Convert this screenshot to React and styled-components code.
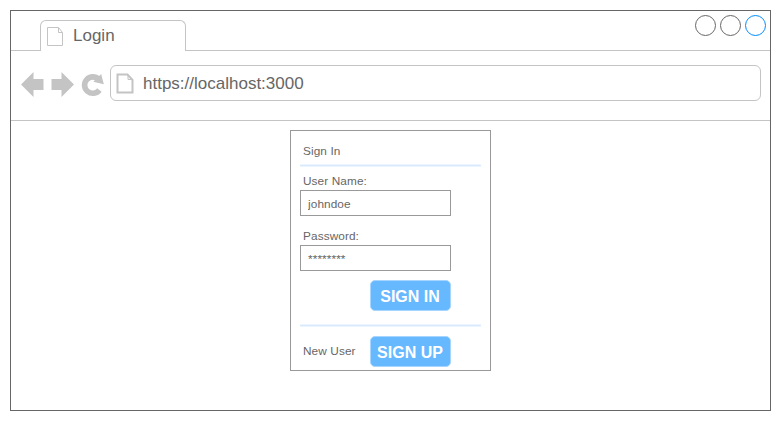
import React from "react";
import styled, { createGlobalStyle } from "styled-components";

const GlobalStyle = createGlobalStyle`
  *, *::before, *::after { box-sizing: border-box; }
  body { margin: 0; background: #fff; font-family: "Liberation Sans", Arial, sans-serif; color: #666; }
`;

const Page = styled.div`
  width: 781px;
  height: 421px;
  padding: 10px;
`;

const Window = styled.main`
  width: 761px;
  height: 401px;
  border: 1px solid #666;
  display: flex;
  flex-direction: column;
`;

const TabStrip = styled.header`
  flex: none;
  height: 40px;
  display: flex;
  align-items: flex-end;
  justify-content: space-between;
  padding: 0 4px 0 29px;
  border-bottom: 1px solid #c4c4c4;
`;

const Tab = styled.div`
  width: 146px;
  height: 31px;
  margin-bottom: -1px;
  padding: 0 0 0 6px;
  display: flex;
  align-items: center;
  gap: 9px;
  background: #fff;
  border: 1px solid #c4c4c4;
  border-bottom: 0;
  border-radius: 6px 6px 0 0;
  font-size: 17px;
  line-height: 20px;
`;

const Controls = styled.div`
  display: flex;
  gap: 4px;
  align-self: flex-start;
  padding-top: 4px;
`;

const Control = styled.span`
  width: 21px;
  height: 21px;
  border: 1px solid ${(p) => (p.$active ? "#008cff" : "#666")};
  border-radius: 50%;
`;

const Toolbar = styled.nav`
  flex: none;
  height: 70px;
  display: flex;
  align-items: flex-start;
  padding: 14px 9px 0 10px;
  border-bottom: 1px solid #c4c4c4;
`;

const NavIcons = styled.svg`
  flex: none;
  display: block;
  width: 89px;
  height: 36px;
`;

const AddressBar = styled.div`
  flex: 1;
  height: 36px;
  display: flex;
  align-items: center;
  gap: 9px;
  padding-left: 5px;
  border: 1px solid #c4c4c4;
  border-radius: 6px;
  font-size: 17px;
  line-height: 20px;
`;

const Url = styled.span`
  padding-top: 2px;
`;

const PageIcon = styled.svg`
  flex: none;
  display: block;
  fill: none;
  stroke: #c4c4c4;
`;

const Content = styled.section`
  flex: 1;
  padding: 9px 0 0 279px;
`;

const Card = styled.form`
  width: 201px;
  height: 241px;
  padding: 13px 9px 0;
  border: 1px solid #999;
  display: flex;
  flex-direction: column;
  font-size: 11.8px;
  letter-spacing: 0.1px;
  line-height: 14px;
`;

const Title = styled.div`
  padding-left: 3px;
`;

const Divider = styled.hr`
  width: 181px;
  height: 3px;
  margin: ${(p) => p.$margin};
  border: 0;
  border-radius: 1px;
  background: linear-gradient(#ebf4ff 0 1px, #d9eaff 1px 2px, #ebf4ff 2px);
`;

const Label = styled.label`
  padding-left: 3px;
  margin-bottom: 2px;
`;

const Input = styled.input`
  width: 151px;
  height: 26px;
  margin: 0 0 ${(p) => p.$after}px;
  padding: 2px 0 0 7px;
  border: 1px solid #999;
  border-radius: 0;
  outline: 0;
  background: #fff;
  color: #666;
  font: inherit;
  letter-spacing: inherit;
`;

const Actions = styled.div`
  display: flex;
  align-items: center;
  justify-content: space-between;
  width: 151px;
  padding-left: 3px;
`;

const Prompt = styled.span`
  padding-bottom: 2px;
`;

const Button = styled.button`
  width: 81px;
  height: 31px;
  margin-left: auto;
  padding: 2px 1px 0 0;
  border: 1px solid #a6d5ff;
  border-radius: 5px;
  background: #66b8ff;
  color: #fff;
  font: bold 16px/18px "Liberation Sans", Arial, sans-serif;
  white-space: nowrap;
`;

export default function App() {
  return (
    <Page>
      <GlobalStyle />
      <Window>
        <TabStrip>
          <Tab>
            <PageIcon width="17" height="20" viewBox="0 0 17 20">
              <path d="M.5 1.5H11.5L15.5 6.5V19.5H.5ZM11.5 1.5V6.5H15.5" />
            </PageIcon>
            Login
          </Tab>
          <Controls>
            <Control />
            <Control />
            <Control $active />
          </Controls>
        </TabStrip>
        <Toolbar>
          <NavIcons viewBox="0 0 89 36">
            <g fill="#c4c4c4">
              <path d="M0 19.5 12.5 7V14H22.5V25H12.5V32Z" />
              <path d="M53 19.5 40.5 7V14H30.5V25H40.5V32Z" />
              <path d="M80.2 9 82.8 19.3 72.3 16.8Z" />
            </g>
            <path d="M77.6 14.3A8.2 8.2 0 1 0 78.4 25" fill="none" stroke="#c4c4c4" strokeWidth="5.6" />
          </NavIcons>
          <AddressBar>
            <PageIcon width="18" height="21" viewBox="0 0 18 21" strokeWidth="2">
              <path d="M1.5 1.5H11.5L16.5 7V19.5H1.5Z" />
              <path d="M12 2V6.5H16" strokeWidth="1" />
            </PageIcon>
            <Url>https://localhost:3000</Url>
          </AddressBar>
        </Toolbar>
        <Content>
          <Card>
            <Title>Sign In</Title>
            <Divider $margin="6px 0 7px 0" />
            <Label htmlFor="user">User Name:</Label>
            <Input id="user" $after={13} defaultValue="johndoe" />
            <Label htmlFor="password">Password:</Label>
            <Input id="password" $after={9} defaultValue="********" />
            <Actions>
              <Button type="button">SIGN IN</Button>
            </Actions>
            <Divider $margin="13px 0 9px 0" />
            <Actions>
              <Prompt>New User</Prompt>
              <Button type="button">SIGN UP</Button>
            </Actions>
          </Card>
        </Content>
      </Window>
    </Page>
  );
}
